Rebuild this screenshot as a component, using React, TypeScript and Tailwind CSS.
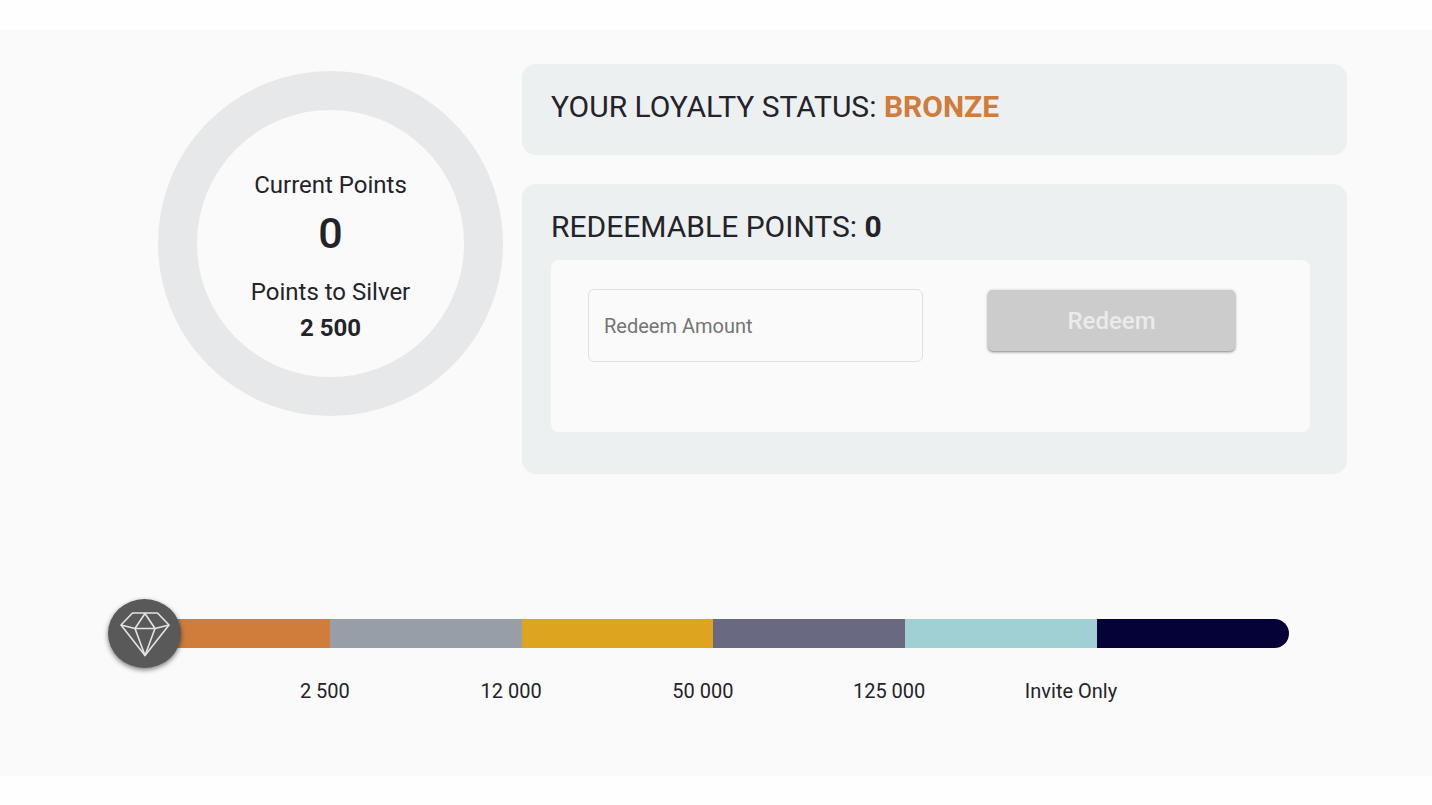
import { useState } from 'react'

interface Tier {
  name: string
  /** Label drawn under the right end of the segment. */
  limit?: string
  color: string
}

const tiers: Tier[] = [
  { name: 'Bronze',   limit: '2 500',       color: 'bg-[#d07c3a]' },
  { name: 'Silver',   limit: '12 000',      color: 'bg-[#979ea8]' },
  { name: 'Gold',     limit: '50 000',      color: 'bg-[#dca41f]' },
  { name: 'Platinum', limit: '125 000',     color: 'bg-[#696a81]' },
  { name: 'Diamond',  limit: 'Invite Only', color: 'bg-[#a0d0d4]' },
  { name: 'Black',                          color: 'bg-[#040237]' },
]

function DiamondIcon() {
  return (
    <svg viewBox="0 0 50 46" className="w-[50px] h-[46px]" fill="none" stroke="#e4e4e4" strokeWidth="1.6" strokeLinejoin="round" aria-hidden="true">
      <path d="M12.5 2H37.5L49 14L25 44.5L1 14Z" />
      <path d="M1 14L15 17.5H35L49 14" />
      <path d="M25 2.5L15 17.5L25 44.5L35 17.5Z" />
    </svg>
  )
}

function PointsRing() {
  return (
    <div className="mt-[7px] w-[345px] h-[345px] shrink-0 rounded-full border-[39px] border-[#e6e8e9] flex flex-col items-center text-center pt-[57px]">
      <div className="text-[24px] leading-[36px]">Current Points</div>
      <div className="text-[43px] leading-[60px] font-medium">0</div>
      <div className="mt-[11px] text-[24px] leading-[36px]">Points to Silver</div>
      <div className="text-[24px] leading-[36px] font-bold">2 500</div>
    </div>
  )
}

function RedeemForm() {
  const [amount, setAmount] = useState('')

  return (
    <form
      onSubmit={e => e.preventDefault()}
      className="mt-[15px] min-h-[172px] rounded-lg bg-[#fafafa] pt-[29px] pl-[37px] pr-[75px] flex items-start justify-between gap-8">
      <input
        type="text"
        aria-label="Redeem Amount"
        placeholder="Redeem Amount"
        value={amount}
        onChange={e => setAmount(e.target.value)}
        className="w-[335px] h-[73px] rounded-md border border-[#dfe1e1] bg-transparent px-[15px] text-[20px] placeholder:text-[#757575] outline-none"
      />
      <button
        type="submit"
        disabled={!amount}
        className="mt-[1px] w-[247px] h-[61px] rounded-[5px] bg-[#cccccc] text-[24px] font-medium text-[#ebebeb] shadow-[0_1px_3px_rgba(0,0,0,0.5)]">
        Redeem
      </button>
    </form>
  )
}

function TierBar() {
  return (
    <div className="mt-[125px] ml-[108px] mr-[143px]">
      <div className="relative h-[68px] pl-[30px] flex items-center">
        <div className="flex-1 h-[29px] flex rounded-r-full overflow-hidden">
          {tiers.map(t => <div key={t.name} className={`flex-1 ${t.color}`} />)}
        </div>
        <div className="absolute left-0 top-0 w-[73px] h-[69px] rounded-[50%] bg-[#595959] shadow-[0_2px_5px_rgba(0,0,0,0.5)] flex items-center justify-center">
          <DiamondIcon />
        </div>
      </div>
      <div className="ml-[50px] -mr-[20px] mt-[9px] flex text-[20px] leading-[30px]">
        {tiers.map(t => <div key={t.name} className="flex-1 text-right">{t.limit}</div>)}
      </div>
    </div>
  )
}

export default function App() {
  return (
    <div className="min-h-screen bg-[#fefefe] py-[29px] font-[Roboto,sans-serif] text-[#232329]">
      <main className="min-h-[747px] bg-[#fafafa] pt-[35px] pb-[70px]">
        <div className="pl-[158px] pr-[85px] flex gap-[19px]">
          <PointsRing />
          <div className="flex-1 min-w-0 flex flex-col gap-[29px]">
            <section className="h-[91px] rounded-[14px] bg-[#ecf0f1] px-[29px] pt-[25px]">
              <h2 className="text-[30px] leading-[36px]">
                YOUR LOYALTY STATUS: <strong className="font-bold text-[#d07c3a]">BRONZE</strong>
              </h2>
            </section>
            <section className="rounded-[14px] bg-[#ecf0f1] pl-[29px] pr-[37px] pt-[25px] pb-[42px]">
              <h2 className="text-[30px] leading-[36px]">
                REDEEMABLE POINTS: <strong className="font-bold">0</strong>
              </h2>
              <RedeemForm />
            </section>
          </div>
        </div>
        <TierBar />
      </main>
    </div>
  )
}
